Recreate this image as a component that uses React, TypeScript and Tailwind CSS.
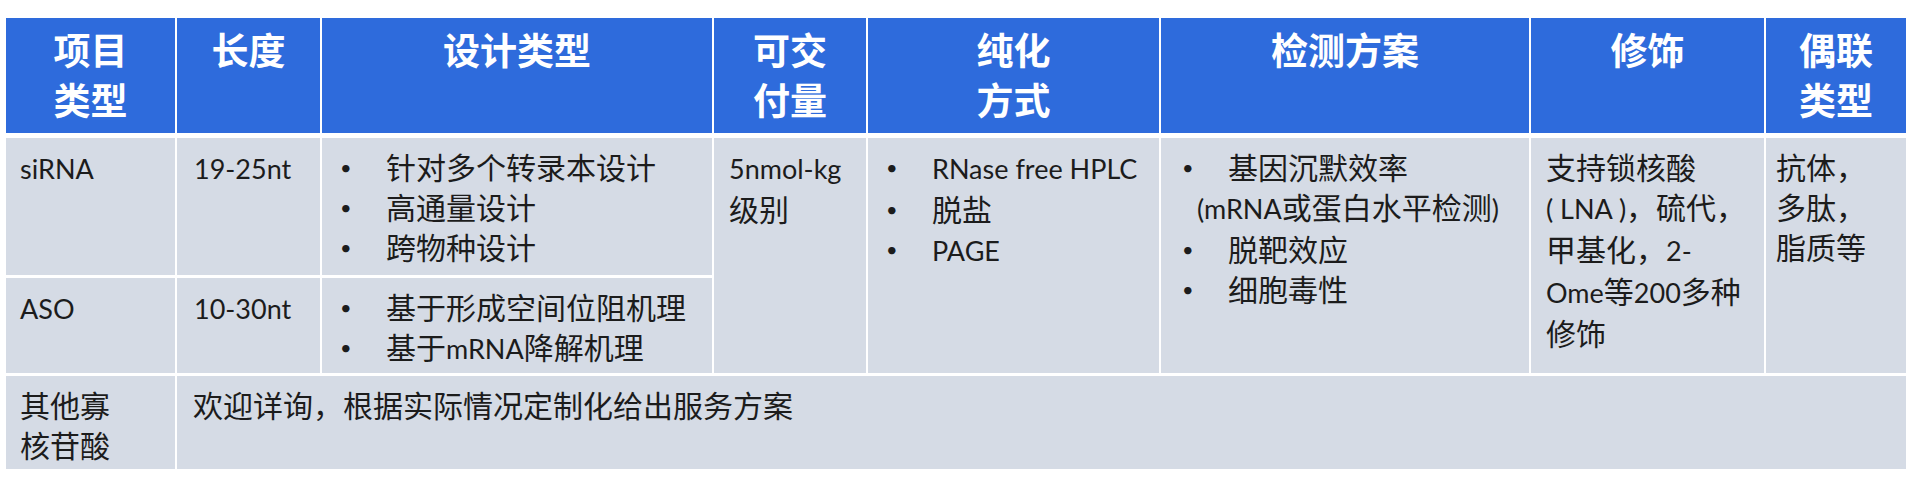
import type { ReactNode } from 'react'

const COLS = 'grid grid-cols-[169px_143px_390px_152px_291px_368px_233px_140px] gap-x-[2px]'

const HEADERS: string[][] = [
  ['项目', '类型'],
  ['长度'],
  ['设计类型'],
  ['可交', '付量'],
  ['纯化', '方式'],
  ['检测方案'],
  ['修饰'],
  ['偶联', '类型'],
]

// latin runs are set a bit smaller so they take Calibri-like widths
function L({ children }: { children: ReactNode }) {
  return <span className="text-[27px]">{children}</span>
}

function Bullets({ items }: { items: ReactNode[] }) {
  return (
    <div>
      {items.map((t, i) => (
        <div key={i} className="flex whitespace-nowrap">
          <span className="w-[46px] shrink-0 text-[20px]">•</span>
          <span>{t}</span>
        </div>
      ))}
    </div>
  )
}

const cell = 'bg-[#d5dbe5] pt-[9px]'

export default function App() {
  return (
    <div
      className="h-[486px] w-[1928px] bg-white pl-[6px] pt-[18px] text-[30px] leading-[40px] text-[#1c1c1c]"
      style={{ fontFamily: 'Lato, "Noto Sans CJK SC", sans-serif' }}
    >
      <div className={`${COLS} h-[115px]`}>
        {HEADERS.map((lines, i) => (
          <div
            key={i}
            className="bg-[#2e6bdc] pt-[6px] text-center text-[37px] font-bold leading-[50px] text-white"
            style={{ fontFamily: '"Noto Sans CJK SC", sans-serif' }}
          >
            {lines.map((l) => (
              <div key={l}>{l}</div>
            ))}
          </div>
        ))}
      </div>

      <div className={`${COLS} mt-[5px] grid-rows-[137px_95px_93px] gap-y-[3px]`}>
        <div className={`${cell} pl-[14px]`}>
          <L>siRNA</L>
        </div>
        <div className={`${cell} pl-[17px]`}>
          <L>19-25nt</L>
        </div>
        <div className={`${cell} pl-[18px]`}>
          <Bullets items={['针对多个转录本设计', '高通量设计', '跨物种设计']} />
        </div>
        <div className={`${cell} row-span-2 pl-[15px]`}>
          <L>5nmol-kg</L>
          <br />
          级别
        </div>
        <div className={`${cell} row-span-2 pl-[18px]`}>
          <Bullets items={[<L>RNase free HPLC</L>, '脱盐', <L>PAGE</L>]} />
        </div>
        <div className={`${cell} row-span-2 pl-[21px]`}>
          <Bullets items={['基因沉默效率']} />
          <div className="pl-[15px]">
            <L>(mRNA</L>或蛋白水平检测<L>)</L>
          </div>
          <Bullets items={['脱靶效应', '细胞毒性']} />
        </div>
        <div className={`${cell} row-span-2 pl-[15px]`}>
          支持锁核酸
          <br />
          <L>( LNA )</L>，硫代，
          <br />
          甲基化，<L>2-</L>
          <br />
          <L>Ome</L>等<L>200</L>多种
          <br />
          修饰
        </div>
        <div className={`${cell} row-span-2 pl-[10px]`}>
          抗体，
          <br />
          多肽，
          <br />
          脂质等
        </div>

        <div className={`${cell} pl-[14px]`}>
          <L>ASO</L>
        </div>
        <div className={`${cell} pl-[17px]`}>
          <L>10-30nt</L>
        </div>
        <div className={`${cell} pl-[18px]`}>
          <Bullets
            items={[
              '基于形成空间位阻机理',
              <>
                基于<L>mRNA</L>降解机理
              </>,
            ]}
          />
        </div>

        <div className={`${cell} pl-[14px]`}>
          其他寡
          <br />
          核苷酸
        </div>
        <div className={`${cell} col-span-7 pl-[16px]`}>欢迎详询，根据实际情况定制化给出服务方案</div>
      </div>
    </div>
  )
}
